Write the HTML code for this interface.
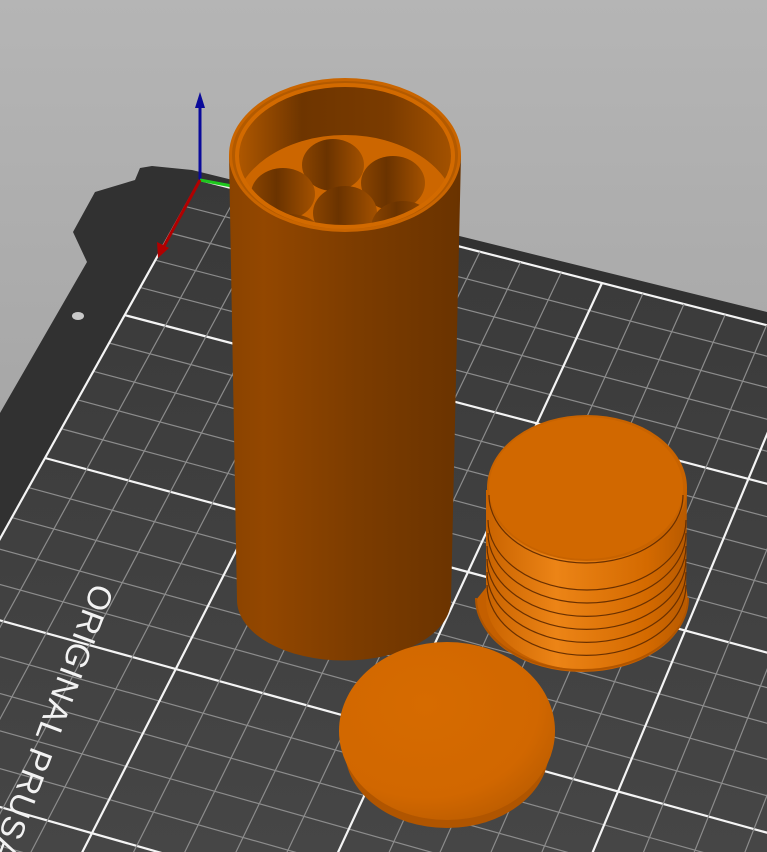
<!DOCTYPE html>
<html><head><meta charset="utf-8"><style>
html,body{margin:0;padding:0;width:767px;height:852px;overflow:hidden;background:#a6a6a6}
svg{display:block}
</style></head><body>
<svg id="s" width="767" height="852" viewBox="0 0 767 852" xmlns="http://www.w3.org/2000/svg" style="overflow:hidden">
<defs>
<linearGradient id="bg" x1="0" y1="0" x2="0" y2="1"><stop offset="0" stop-color="#b5b5b5"/><stop offset="1" stop-color="#989898"/></linearGradient>
<linearGradient id="gridf" x1="0" y1="0" x2="0" y2="1"><stop offset="0" stop-color="#393939"/><stop offset="1" stop-color="#4d4d4d"/></linearGradient>
<linearGradient id="body" x1="0" y1="0" x2="1" y2="0"><stop offset="0" stop-color="#8a4300"/><stop offset="0.15" stop-color="#934700"/><stop offset="0.55" stop-color="#7c3c00"/><stop offset="1" stop-color="#6a3300"/></linearGradient>
<linearGradient id="inner" x1="0" y1="0" x2="1" y2="0"><stop offset="0" stop-color="#b05800"/><stop offset="0.3" stop-color="#6e3500"/><stop offset="0.7" stop-color="#7a3b00"/><stop offset="1" stop-color="#a45200"/></linearGradient>
<linearGradient id="hole" x1="0" y1="0" x2="1" y2="0"><stop offset="0" stop-color="#8a4400"/><stop offset="0.4" stop-color="#6a3300"/><stop offset="1" stop-color="#a35100"/></linearGradient>
<linearGradient id="lidside" x1="0" y1="0" x2="1" y2="0"><stop offset="0" stop-color="#c96300"/><stop offset="0.35" stop-color="#ec8416"/><stop offset="0.8" stop-color="#d46a00"/><stop offset="1" stop-color="#b85a00"/></linearGradient>
<radialGradient id="cap" cx="0.4" cy="0.35" r="0.7"><stop offset="0" stop-color="#d66b00"/><stop offset="0.75" stop-color="#d16700"/><stop offset="1" stop-color="#bd5d00"/></radialGradient>
<clipPath id="inclip"><ellipse cx="345" cy="156" rx="108" ry="71"/></clipPath>
</defs>
<rect width="767" height="852" fill="url(#bg)"/>
<polygon points="140,168 152,166 192,170 767,312 767,852 0,852 0,413 87,262 73,232 95,192 135,180" fill="#313131"/>
<ellipse cx="78" cy="316" rx="6" ry="4" fill="#c8c8c8"/>
<g id="grid"></g>
<text x="0" y="0" transform="translate(93,582) rotate(110.5)" font-family="Liberation Sans, sans-serif" font-size="33" fill="#f2f2f2" letter-spacing="1">ORIGINAL PRUSA</text>
<line x1="200" y1="180" x2="200" y2="105" stroke="#0a0a9a" stroke-width="3"/>
<polygon points="195,108 205,108 200,92" fill="#0a0a9a"/>
<line x1="200" y1="180" x2="232" y2="186" stroke="#1ec81e" stroke-width="3"/>
<line x1="200" y1="180" x2="164" y2="246" stroke="#b00000" stroke-width="3"/>
<polygon points="157,242 169,248 158,258" fill="#b00000"/>
<path d="M229,155 L237,600 A106,60 0 0 0 451,600 L461,155 Z" fill="url(#body)"/>
<ellipse cx="345" cy="155" rx="116" ry="77" fill="#c96500"/>
<ellipse cx="345" cy="155" rx="113" ry="74" fill="#b35a00"/>
<ellipse cx="345" cy="156" rx="108" ry="71" fill="url(#inner)"/>
<g clip-path="url(#inclip)">
<ellipse cx="345" cy="215" rx="112" ry="80" fill="#cc6600"/>
<ellipse cx="333" cy="165" rx="31" ry="26" fill="url(#hole)"/>
<ellipse cx="393" cy="183" rx="32" ry="27" fill="url(#hole)"/>
<ellipse cx="283" cy="194" rx="32" ry="26" fill="url(#hole)"/>
<ellipse cx="345" cy="213" rx="32" ry="27" fill="url(#hole)"/>
<ellipse cx="403" cy="228" rx="32" ry="27" fill="url(#hole)"/>
<ellipse cx="290" cy="234" rx="31" ry="20" fill="url(#hole)"/>
</g>
<ellipse cx="345" cy="156" rx="108" ry="71" fill="none" stroke="#d26a00" stroke-width="4"/>
<path d="M476,600 A106,72 0 0 0 688,600 L686,585 A100,72 0 0 0 488,585 Z" fill="#c45f00"/>
<path d="M486,490 L486,600 A100,70 0 0 0 686,600 L687,490 Z" fill="url(#lidside)"/>
<path d="M476,598 A106,72 0 0 0 688,598" fill="none" stroke="#b05500" stroke-width="2"/>
<g fill="none" stroke="#6a3000" stroke-width="1.2">
<path d="M488,520 A99,70 0 0 0 686,520"/>
<path d="M488,533 A99,70 0 0 0 686,533"/>
<path d="M487,546 A99,70 0 0 0 686,546"/>
<path d="M487,559 A99,70 0 0 0 686,559"/>
<path d="M487,572 A99,70 0 0 0 686,572"/>
<path d="M487,585 A99,70 0 0 0 686,585"/>
</g>
<ellipse cx="587" cy="488" rx="100" ry="73" fill="#c86300"/>
<ellipse cx="586" cy="488" rx="97" ry="71" fill="#d16800"/>
<path d="M489,495 A97,68 0 0 0 683,495" fill="none" stroke="#6a3000" stroke-width="1.2"/>
<ellipse cx="447" cy="750" rx="102" ry="78" fill="#b05500"/>
<path d="M352,772 A100,52 0 0 0 542,772" fill="none" stroke="#6a3000" stroke-width="1"/>
<ellipse cx="447" cy="731" rx="108" ry="89" fill="url(#cap)"/>
</svg>
<script>
(function(){
function solve(A,b){var n=b.length;for(var i=0;i<n;i++){var m=i;for(var k=i+1;k<n;k++)if(Math.abs(A[k][i])>Math.abs(A[m][i]))m=k;var t=A[i];A[i]=A[m];A[m]=t;t=b[i];b[i]=b[m];b[m]=t;for(var k=i+1;k<n;k++){var f=A[k][i]/A[i][i];for(var j=i;j<n;j++)A[k][j]-=f*A[i][j];b[k]-=f*b[i];}}var x=new Array(n);for(var i=n-1;i>=0;i--){var s=b[i];for(var j=i+1;j<n;j++)s-=A[i][j]*x[j];x[i]=s/A[i][i];}return x;}
var src=[[0,0],[0,100],[100,0],[100,100]],dst=[[200,180],[602,283],[45,458],[468,572]];
var A=[],b=[];for(var i=0;i<4;i++){var X=src[i][0],Y=src[i][1],u=dst[i][0],v=dst[i][1];A.push([X,Y,1,0,0,0,-u*X,-u*Y]);b.push(u);A.push([0,0,0,X,Y,1,-v*X,-v*Y]);b.push(v);}
var h=solve(A,b);
function P(X,Y){var w=h[6]*X+h[7]*Y+1;return [(h[0]*X+h[1]*Y+h[2])/w,(h[3]*X+h[4]*Y+h[5])/w];}
var NS="http://www.w3.org/2000/svg",g=document.getElementById("grid");
var XM=250,YM=210;
var c=[P(0,0),P(0,YM),P(XM,YM),P(XM,0)];
var poly=document.createElementNS(NS,"polygon");poly.setAttribute("points",c.map(function(p){return p[0].toFixed(1)+","+p[1].toFixed(1)}).join(" "));poly.setAttribute("fill","url(#gridf)");g.appendChild(poly);
function line(a,bb,major){var l=document.createElementNS(NS,"line");l.setAttribute("x1",a[0]);l.setAttribute("y1",a[1]);l.setAttribute("x2",bb[0]);l.setAttribute("y2",bb[1]);l.setAttribute("stroke",major?"#f4f4f4":"#8c8c8c");l.setAttribute("stroke-width",major?2.2:1.2);g.appendChild(l);}
for(var X=0;X<=XM;X+=10)line(P(X,0),P(X,YM),X%50==0);
for(var Y=0;Y<=YM;Y+=10)line(P(0,Y),P(XM,Y),Y%50==0);
})();
</script>
</body></html>
